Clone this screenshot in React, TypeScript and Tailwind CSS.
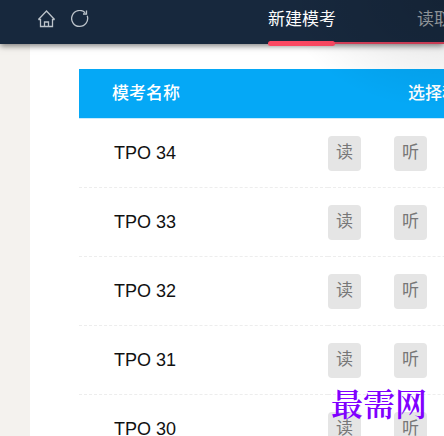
type Mock = {
  id: number;
  name: string;
};

const mocks: Mock[] = [34, 33, 32, 31, 30].map((id) => ({ id, name: `TPO ${id}` }));

const sections = ["读", "听"];

function HomeIcon() {
  return (
    <svg width="18" height="18" viewBox="0 0 18 18" fill="none" stroke="currentColor" strokeWidth="1.300">
      <path d="M.5 9.500 8.500 1l8 8.500" />
      <path d="M.5 9.500h2v7h12v-7h2" />
      <path d="M6.500 16.500v-4.500h4v4.500" />
    </svg>
  );
}

function ReloadIcon() {
  return (
    <svg width="18" height="18" viewBox="0 0 18 18" fill="none" stroke="currentColor" strokeWidth="1.300">
      <path d="M16.200 5.800A8 8 0 1 1 14.200 2.700" />
      <path d="M15.500 .5v3.500h-3.500" />
    </svg>
  );
}

function TopBar() {
  return (
    <header className="relative z-10 flex h-[44px] bg-[#17283d] text-[#bcc3ca] shadow-[0_2px_6px_rgba(0,0,0,0.5)]">
      {/* Track under the tabs */}
      <span className="absolute right-0 bottom-0 left-[300px] h-[2px] bg-[#d5405a]" />
      <div className="flex w-[268px] shrink-0 items-start gap-[15px] pt-[10px] pl-[38px]">
        <button type="button" aria-label="首页">
          <HomeIcon />
        </button>
        <button type="button" aria-label="刷新">
          <ReloadIcon />
        </button>
      </div>
      <nav className="flex min-w-0 flex-1 items-start gap-[82px] whitespace-nowrap text-[17px] leading-[40px]">
        <a href="#new" aria-current="page" className="relative w-[67px] shrink-0 text-white">
          新建模考
          <span className="absolute inset-x-0 top-[41px] h-[5px] rounded-full bg-[#fb4862]" />
        </a>
        <a href="#read" className="shrink-0 text-[#9da2a7]">
          读取模考
        </a>
      </nav>
    </header>
  );
}

function MockTable() {
  return (
    <table className="w-[760px] table-fixed border-separate border-spacing-0 whitespace-nowrap text-left">
      <colgroup>
        <col className="w-[249px]" />
        <col />
      </colgroup>
      <thead>
        <tr className="h-[50px] text-[17px] text-white">
          <th className="border-b border-[#c9ebfd] bg-[#05a8f6] bg-clip-padding pl-[33px] font-medium">模考名称</th>
          <th className="border-b border-[#c9ebfd] bg-[#05a8f6] bg-clip-padding pl-[80px] font-medium">选择科目</th>
        </tr>
      </thead>
      <tbody>
        {mocks.map((mock) => (
          <tr key={mock.id} className="h-[69px]">
            <td className="border-b border-dashed border-[#ededed] pl-[35px] text-[18px] text-[#111111]">
              {mock.name}
            </td>
            <td className="border-b border-dashed border-[#ededed]">
              <div className="flex gap-[33px]">
                {sections.map((section) => (
                  <button
                    key={section}
                    type="button"
                    className="h-[35px] w-[33px] rounded-[4px] bg-[#e5e5e5] text-[17px] text-[#777777]"
                  >
                    {section}
                  </button>
                ))}
              </div>
            </td>
          </tr>
        ))}
      </tbody>
    </table>
  );
}

export default function App() {
  return (
    <div className="relative flex h-screen flex-col overflow-hidden bg-[#f4f2ee] font-['Liberation_Sans','Noto_Sans_CJK_SC',sans-serif]">
      <TopBar />
      <main className="ml-[30px] min-h-0 flex-1 overflow-hidden bg-white pt-[25px] pl-[49px]">
        <MockTable />
      </main>

      {/* Soft shade falling from the top right corner */}
      <div className="pointer-events-none absolute top-0 right-0 z-20 h-[110px] w-[160px] bg-[radial-gradient(ellipse_at_top_right,rgba(0,0,0,0.12),transparent_70%)]" />

      <div className="pointer-events-none absolute right-[17px] bottom-[10px] z-30 font-['Noto_Serif_CJK_SC','Source_Han_Serif_SC','Noto_Sans_CJK_SC',serif] text-[32px] leading-[48px] font-semibold text-[#8000ff]">
        最需网
      </div>
    </div>
  );
}
